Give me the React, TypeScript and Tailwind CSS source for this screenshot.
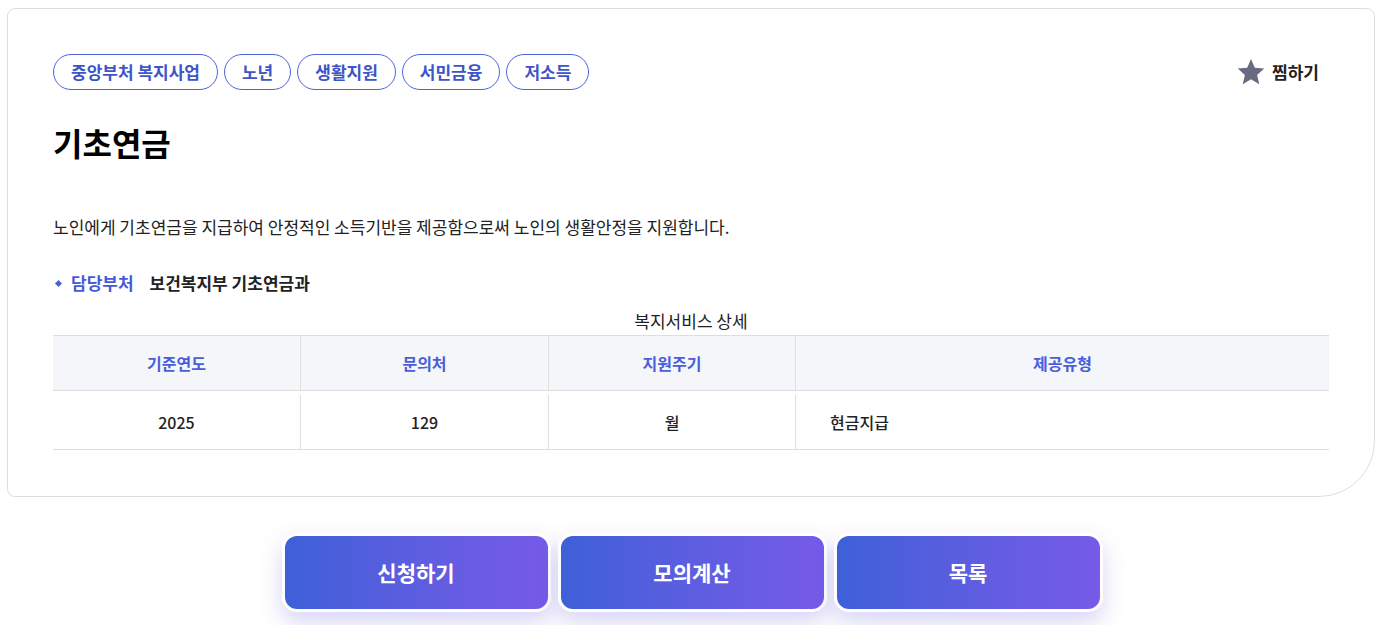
import React from 'react';

const TAGS = ['중앙부처 복지사업', '노년', '생활지원', '서민금융', '저소득'];

const COLUMNS = [
  { head: '기준연도', value: '2025', align: 'center' },
  { head: '문의처', value: '129', align: 'center' },
  { head: '지원주기', value: '월', align: 'center' },
  { head: '제공유형', value: '현금지급', align: 'left' },
];

function StarIcon() {
  return (
    <svg width="30" height="28" viewBox="0 0 24 23" aria-hidden="true">
      <path
        d="M12 0.8l3.1 7.2 7.8 0.7-5.9 5.2 1.8 7.7L12 17.5l-6.8 4.1 1.8-7.7-5.9-5.2 7.8-0.7z"
        fill="#676a80"
      />
    </svg>
  );
}

export default function App() {
  return (
    <div
      className="min-h-screen bg-white text-[#222]"
      style={{ fontFamily: '"Noto Sans CJK KR", "Noto Sans", sans-serif' }}
    >
      <div className="pt-[8px] pl-[7px] pr-[11px]">
        {/* detail card */}
        <section className="border border-[#dedede] rounded-t-[8px] rounded-bl-[8px] rounded-br-[56px] px-[45px] pt-[45px] pb-[46px]">
          <div className="flex items-center justify-between">
            <div className="flex gap-[6px]">
              {TAGS.map((tag) => (
                <span
                  key={tag}
                  className="h-[36px] px-[17px] flex items-center rounded-full border border-[#4b63d8] text-[#3d55c8] text-[17px] font-semibold"
                >
                  {tag}
                </span>
              ))}
            </div>
            <button className="flex items-center gap-[6px] mr-[10px] text-[17px] font-bold text-[#222]">
              <StarIcon />
              찜하기
            </button>
          </div>

          <h1 className="mt-[28px] text-[32px] font-bold leading-[48px] text-black">기초연금</h1>

          <p className="mt-[48px] text-[17px] leading-[26px]">
            노인에게 기초연금을 지급하여 안정적인 소득기반을 제공함으로써 노인의 생활안정을 지원합니다.
          </p>

          <div className="mt-[30px] flex items-center text-[17px] leading-[26px]">
            <span className="ml-[3px] w-[5px] h-[5px] bg-[#4b63d8] rotate-45" />
            <span className="ml-[10px] text-[#4759d6] font-semibold">담당부처</span>
            <span className="ml-[16px] font-semibold">보건복지부 기초연금과</span>
          </div>

          {/* service table */}
          <div className="mt-[12px]">
            <div className="text-center text-[17px] leading-[26px] mb-[1px]">복지서비스 상세</div>
            <div className="grid grid-cols-[247px_248px_247px_1fr] border-t border-[#dedede]">
              {COLUMNS.map((col, i) => (
                <div
                  key={col.head}
                  className={`h-[55px] flex items-center justify-center bg-[#f5f6fa] border-b border-[#dedede] text-[16px] font-semibold text-[#4a5ddb] ${
                    i > 0 ? 'border-l' : ''
                  }`}
                >
                  {col.head}
                </div>
              ))}
            </div>
            <div className="grid grid-cols-[247px_248px_247px_1fr] pt-[4px] border-b border-[#dedede]">
              {COLUMNS.map((col, i) => (
                <div
                  key={col.head}
                  className={`h-[54px] flex items-center text-[16px] font-medium ${
                    col.align === 'left' ? 'justify-start pl-[34px]' : 'justify-center'
                  } ${i > 0 ? 'border-l border-[#dedede]' : ''}`}
                >
                  {col.value}
                </div>
              ))}
            </div>
          </div>
        </section>
      </div>

      {/* actions */}
      <div className="mt-[36px] flex justify-center gap-[7px] pr-[2px]">
        {['신청하기', '모의계산', '목록'].map((label) => (
          <button
            key={label}
            className="w-[269px] h-[79px] rounded-[15px] border-[3px] border-white bg-gradient-to-r from-[#3d60d8] to-[#765ae8] text-white text-[21px] font-bold shadow-[0_10px_22px_rgba(96,88,214,0.25)]"
          >
            {label}
          </button>
        ))}
      </div>
    </div>
  );
}
